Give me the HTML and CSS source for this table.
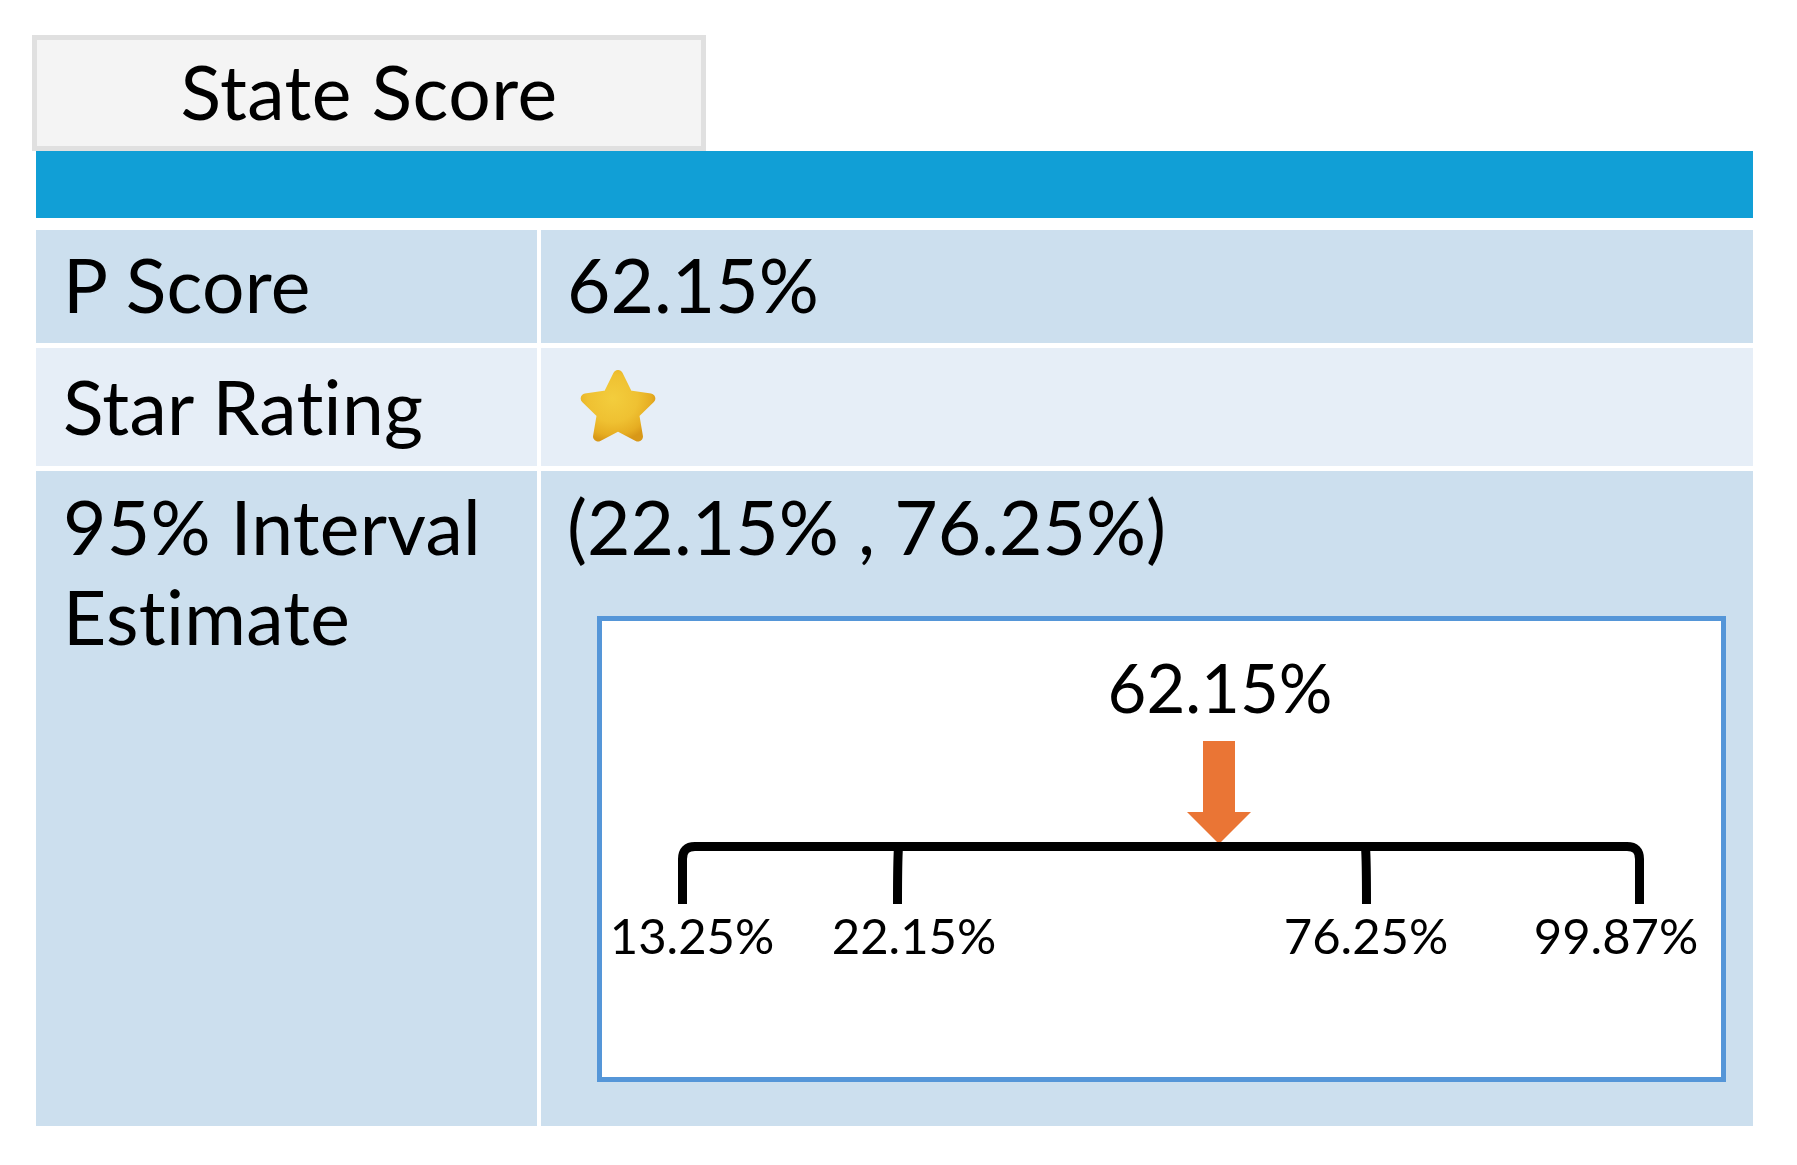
FILE: index.html
```html
<!DOCTYPE html>
<html lang="en">
<head>
<meta charset="utf-8">
<title>State Score</title>
<link rel="stylesheet" href="styles.css">
</head>
<body>
<div class="page">
  <div class="tab">State Score</div>
  <div class="band"></div>
  <div class="grid">
    <div class="cell dark label mid">P Score</div>
    <div class="cell dark value mid">62.15%</div>
    <div class="cell light label mid">Star Rating</div>
    <div class="cell light value mid">
      <svg class="star" width="76" height="76" viewBox="0 0 76 76" aria-label="1 star">
        <defs>
          <radialGradient id="sg" cx="0.42" cy="0.38" r="0.7">
            <stop offset="0" stop-color="#f3cd3d"/>
            <stop offset="0.55" stop-color="#efc132"/>
            <stop offset="0.85" stop-color="#e6ad22"/>
            <stop offset="1" stop-color="#d89818"/>
          </radialGradient>
        </defs>
        <polygon points="38,5 47.99,25.25 70.34,28.49 54.17,44.25 57.98,66.51 38,56 18.02,66.51 21.83,44.25 5.66,28.49 28.01,25.25" fill="url(#sg)" stroke="url(#sg)" stroke-width="10" stroke-linejoin="round"/>
      </svg>
    </div>
    <div class="cell dark label top">95% Interval<br>Estimate</div>
    <div class="cell dark value top">
      <div class="interval">(22.15% , 76.25%)</div>
      <div class="chart">
        <svg width="1119" height="456" viewBox="0 0 1119 456">
          <text class="big" x="618" y="92" text-anchor="middle">62.15%</text>
          <path d="M601 120 H633 V191 H649 L617 223 L585 191 H601 Z" fill="#ea7535"/>
          <path d="M80.5 283 V238 Q80.5 225.5 93 225.5 H1025 Q1037.5 225.5 1037.5 238 V283" fill="none" stroke="#000" stroke-width="9"/>
          <path d="M296.5 226 Q295.5 240 295.5 283" fill="none" stroke="#000" stroke-width="9"/>
          <path d="M763.5 226 Q764.5 240 764.5 283" fill="none" stroke="#000" stroke-width="9"/>
          <text class="tick" x="90" y="333" text-anchor="middle">13.25%</text>
          <text class="tick" x="312" y="333" text-anchor="middle">22.15%</text>
          <text class="tick" x="764" y="333" text-anchor="middle">76.25%</text>
          <text class="tick" x="1014" y="333" text-anchor="middle">99.87%</text>
        </svg>
      </div>
    </div>
  </div>
</div>
</body>
</html>
```
FILE: styles.css
```css
html, body {
  margin: 0;
  padding: 0;
  background: #ffffff;
}
body {
  font-family: Lato, "Open Sans", sans-serif;
  color: #000;
}
.page {
  padding: 35px 0 0 32px;
}
.tab {
  box-sizing: border-box;
  width: 674px;
  height: 116px;
  border: 5px solid #e0e0e0;
  background: #f4f4f4;
  display: flex;
  align-items: center;
  justify-content: center;
  font-size: 75px;
  letter-spacing: 0.5px;
  line-height: 1;
  padding-bottom: 4px;
}
.band {
  margin-left: 4px;
  width: 1717px;
  height: 67px;
  background: #119fd6;
}
.grid {
  margin-left: 4px;
  margin-top: 12px;
  width: 1717px;
  display: grid;
  grid-template-columns: 501px 1212px;
  grid-template-rows: 113px 118px 655px;
  column-gap: 4px;
  row-gap: 5px;
}
.cell {
  box-sizing: border-box;
  font-size: 75px;
}
.dark { background: #ccdfee; }
.light { background: #e6eef7; }
.label {
  padding-left: 27px;
  letter-spacing: 0.3px;
}
.value { padding-left: 26px; }
.mid {
  display: flex;
  align-items: center;
  line-height: 1.2;
  padding-bottom: 6px;
}
.light.mid { padding-bottom: 2px; }
.value.mid .star {
  margin-left: 13px;
  margin-top: 4px;
}
.top {
  line-height: 90px;
  padding-top: 10px;
}
.chart {
  box-sizing: border-box;
  margin-top: 45px;
  margin-left: 30px;
  width: 1129px;
  height: 466px;
  border: 5px solid #5596d8;
  background: #ffffff;
}
.chart svg { display: block; }
.chart .big {
  font-family: Lato, sans-serif;
  font-size: 67px;
}
.chart .tick {
  font-family: Lato, sans-serif;
  font-size: 49px;
}
```
